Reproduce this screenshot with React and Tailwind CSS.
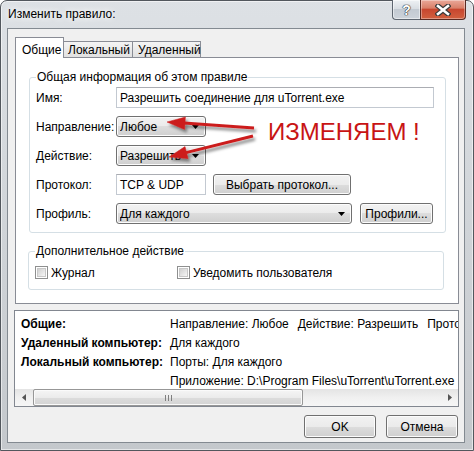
import React from "react";

const BTN =
  "bg-[linear-gradient(#f2f2f2,#ebebeb_50%,#dddddd_50%,#cfcfcf)] border border-[#707070] rounded-[3px] shadow-[inset_0_0_0_1px_#fcfcfc]";

function DownArrow() {
  return (
    <svg width="7" height="4" viewBox="0 0 7 4" className="shrink-0">
      <path d="M0 0h7L3.5 4z" fill="#000" />
    </svg>
  );
}

function Combo({ className, text }) {
  return (
    <div className={"h-[21px] flex items-center pl-[3px] pr-[6px] gap-[2px] " + BTN + " " + className}>
      <span className="flex-1 overflow-hidden whitespace-nowrap">{text}</span>
      <DownArrow />
    </div>
  );
}

function Input({ className, text }) {
  return (
    <div
      className={
        "h-[21px] flex items-center pl-[3px] bg-white border border-[#c3c9d1] border-t-[#abadb3] whitespace-nowrap overflow-hidden " +
        className
      }
    >
      {text}
    </div>
  );
}

function Button({ className, children }) {
  return (
    <div className={"flex items-center justify-center " + BTN + " " + className}>{children}</div>
  );
}

function Check() {
  return (
    <div className="w-[13px] h-[13px] border border-[#8e8f8f] bg-white p-px shrink-0">
      <div className="w-full h-full bg-linear-to-br from-[#d0d0d0] to-[#f6f6f6] border border-[#c8c8c8]" />
    </div>
  );
}

function Row({ label, children }) {
  return (
    <div className="flex items-center h-[21px]">
      <span className="w-[80px] shrink-0">{label}</span>
      {children}
    </div>
  );
}

function SumRow({ label, children }) {
  return (
    <div className="flex items-center h-[19px] whitespace-nowrap">
      <span className="w-[149px] shrink-0 font-bold">{label}</span>
      {children}
    </div>
  );
}

export default function App() {
  return (
    <div className="w-[474px] h-[451px] bg-white relative overflow-hidden font-['Liberation_Sans',Arial,sans-serif] text-[12px] text-black">
      <div className="w-[474px] h-[451px] rounded-t-[7px] border border-[#52575d] bg-linear-to-b from-[#dde1e5] via-[#d0d4d8] to-[#c4c8cc] shadow-[inset_0_0_0_1px_rgba(255,255,255,0.55)] flex flex-col">
        {/* Title bar */}
        <div className="h-[27px] flex items-start justify-between">
          <span className="ml-[7px] mt-[6px] leading-[15px] [text-shadow:0_0_6px_#fff,0_0_10px_#fff]">
            Изменить правило:
          </span>
          <div className="flex mr-[7px] -mt-px">
            <div className="w-[28px] h-[20px] rounded-bl-[4px] border border-t-0 border-r-0 border-[#5e6670] bg-[linear-gradient(#eef1f4,#d9dee3_45%,#c3cad2_50%,#cdd3da)] shadow-[inset_0_0_0_1px_rgba(255,255,255,0.5)] flex items-center justify-center">
              <span className="text-[14px] font-bold text-white leading-none [text-shadow:0_0_1px_#222,0_0_1px_#222,0_0_1px_#222]">
                ?
              </span>
            </div>
            <div className="w-[46px] h-[20px] rounded-br-[4px] border border-t-0 border-[#5a2a22] bg-[linear-gradient(#eaa899,#d98069_42%,#c8472f_50%,#d2603f)] shadow-[inset_0_0_0_1px_rgba(255,255,255,0.35)] flex items-center justify-center">
              <svg width="16" height="12" viewBox="0 0 16 12">
                <path d="M3 2L13 10M13 2L3 10" stroke="#3a3a3a" strokeWidth="5" strokeLinecap="square" />
                <path d="M3 2L13 10M13 2L3 10" stroke="#fff" strokeWidth="2.6" strokeLinecap="square" />
              </svg>
            </div>
          </div>
        </div>

        {/* Client area */}
        <div className="ml-[6px] w-[458px] h-[415px] border border-[#838a91] bg-[#f0f0f0] flex flex-col">
          {/* Tabs */}
          <div className="ml-[7px] mt-[8px] h-[20px] flex items-start">
            <div className="relative z-10 w-[49px] h-[21px] bg-white border border-b-0 border-[#898c95] flex items-start pl-[6px] pt-[3px]">
              Общие
            </div>
            <div className="mt-[4px] w-[69px] h-[16px] border border-b-0 border-l-0 border-[#898c95] bg-linear-to-b from-[#f4f4f4] to-[#e1e1e1] flex items-center pl-[4px]">
              Локальный
            </div>
            <div className="mt-[4px] w-[68px] h-[16px] border border-b-0 border-l-0 border-[#898c95] bg-linear-to-b from-[#f4f4f4] to-[#e1e1e1] flex items-center pl-[5px]">
              Удаленный
            </div>
          </div>

          {/* Tab panel */}
          <div className="ml-[7px] w-[444px] h-[247px] border border-[#898c95] bg-white flex flex-col">
            <fieldset className="ml-[13px] mt-[12px] w-[417px] border border-[#d5dfe5] rounded-[3px] pl-[6px] pb-[8px]">
              <legend className="px-[1px] leading-[14px]">Общая информация об этом правиле</legend>
              <div className="flex flex-col gap-[8px] pt-[3px]">
                <Row label="Имя:">
                  <Input className="w-[318px]" text="Разрешить соединение для uTorrent.exe" />
                </Row>
                <Row label="Направление:">
                  <Combo className="w-[90px]" text="Любое" />
                </Row>
                <Row label="Действие:">
                  <Combo className="w-[90px]" text="Разрешить" />
                </Row>
                <Row label="Протокол:">
                  <Input className="w-[90px]" text="TCP & UDP" />
                  <Button className="ml-[7px] w-[138px] h-[21px]">Выбрать протокол...</Button>
                </Row>
                <Row label="Профиль:">
                  <Combo className="w-[236px]" text="Для каждого" />
                  <Button className="ml-[8px] w-[73px] h-[21px]">Профили...</Button>
                </Row>
              </div>
            </fieldset>

            <fieldset className="ml-[12px] mt-[11px] w-[416px] border border-[#d5dfe5] rounded-[3px] pl-[6px] pb-[9px]">
              <legend className="px-[1px] leading-[14px]">Дополнительное действие</legend>
              <div className="flex items-center h-[15px] mt-[7px]">
                <div className="w-[142px] flex items-center gap-[3px]">
                  <Check />
                  <span>Журнал</span>
                </div>
                <div className="flex items-center gap-[3px]">
                  <Check />
                  <span>Уведомить пользователя</span>
                </div>
              </div>
            </fieldset>
          </div>

          {/* Summary */}
          <div className="ml-[6px] mt-[6px] w-[445px] h-[97px] border border-[#828790] bg-white flex flex-col">
            <div className="flex-1 overflow-hidden pl-[6px] pt-[3px]">
              <SumRow label="Общие:">
                <span className="flex gap-[9px]">
                  <span>Направление: Любое</span>
                  <span>Действие: Разрешить</span>
                  <span>Протокол: TCP &amp; UDP</span>
                </span>
              </SumRow>
              <SumRow label="Удаленный компьютер:">
                <span>Для каждого</span>
              </SumRow>
              <SumRow label="Локальный компьютер:">
                <span>Порты: Для каждого</span>
              </SumRow>
              <SumRow label="">
                <span>Приложение: D:\Program Files\uTorrent\uTorrent.exe</span>
              </SumRow>
            </div>
            <div className="h-[17px] flex bg-linear-to-b from-[#e4e4e4] via-[#f0f0f0] to-[#f6f6f6]">
              <div className="w-[17px] flex items-center justify-center">
                <svg width="4" height="7" viewBox="0 0 4 7">
                  <path d="M4 0v7L0 3.5z" fill="#555" />
                </svg>
              </div>
              <div className="ml-px w-[270px] h-[17px] rounded-[2px] border border-[#979797] bg-[linear-gradient(#f5f5f5,#ebebeb_50%,#dcdcdc_50%,#d4d4d4)] shadow-[inset_0_0_0_1px_#fafafa] flex items-center justify-center gap-[2px]">
                <div className="w-px h-[6px] bg-[#7f7f7f]" />
                <div className="w-px h-[6px] bg-[#7f7f7f]" />
                <div className="w-px h-[6px] bg-[#7f7f7f]" />
              </div>
              <div className="flex-1" />
              <div className="w-[17px] flex items-center justify-center">
                <svg width="4" height="7" viewBox="0 0 4 7">
                  <path d="M0 0v7L4 3.5z" fill="#555" />
                </svg>
              </div>
            </div>
          </div>

          {/* Buttons */}
          <div className="mt-[8px] mr-[6px] flex justify-end gap-[10px]">
            <Button className="w-[72px] h-[23px] border-[#3c7fb1] shadow-[inset_0_0_0_1px_#bfe6f9]">OK</Button>
            <Button className="w-[72px] h-[23px]">Отмена</Button>
          </div>
        </div>
      </div>

      {/* Annotation overlay */}
      <svg className="absolute left-0 top-0 pointer-events-none" width="474" height="451" viewBox="0 0 474 451">
        <defs>
          <filter id="sh" x="-20%" y="-50%" width="140%" height="200%">
            <feDropShadow dx="2" dy="3" stdDeviation="1.8" floodColor="#000" floodOpacity="0.45" />
          </filter>
        </defs>
        <g filter="url(#sh)" fill="#cc1f1f" stroke="#cc1f1f">
          <line x1="184" y1="123" x2="254" y2="128" strokeWidth="3" />
          <polygon points="167,122 185.4,117 184.6,129.4" strokeWidth="0.5" />
          <line x1="186" y1="152.6" x2="253" y2="136" strokeWidth="3" />
          <polygon points="169,157 185,146.6 188,158.6" strokeWidth="0.5" />
        </g>
      </svg>
      <div className="absolute left-[268px] top-[120px] text-[24px] leading-[24px] text-[#c81414] whitespace-nowrap">
        ИЗМЕНЯЕМ !
      </div>
    </div>
  );
}
